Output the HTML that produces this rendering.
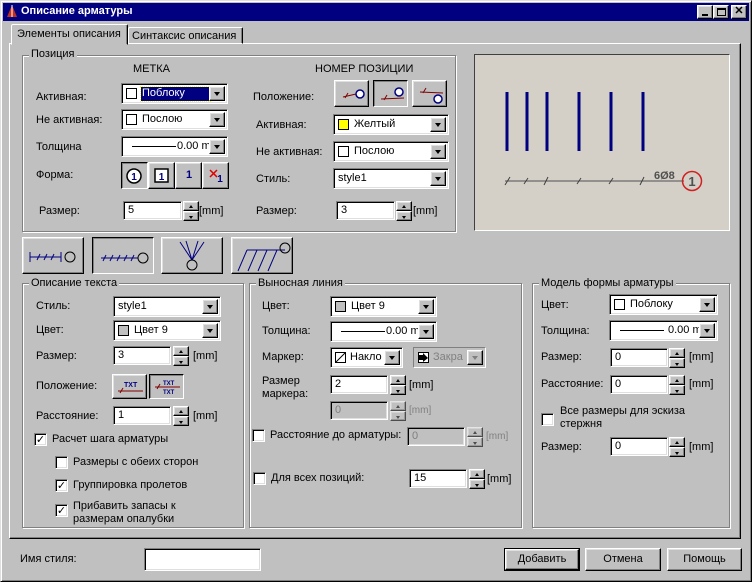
<!DOCTYPE html>
<html><head><meta charset="utf-8"><style>
*{box-sizing:border-box;margin:0;padding:0}
body{width:752px;height:582px;background:#c0c0c0;font:11px "Liberation Sans",sans-serif;color:#000;position:relative;overflow:hidden}
div,span,i,svg{position:absolute}
.l{white-space:nowrap}
.f{background:#fff;border:1px solid;border-color:#808080 #fff #fff #808080;box-shadow:inset 1px 1px #000,inset -1px -1px #dfdfdf}
.f .t{left:4px;top:3px;white-space:nowrap}
.fd{background:#c0c0c0}
.fd .t{color:#808080}
.b{background:#c0c0c0;border:1px solid;border-color:#fff #000 #000 #fff;box-shadow:inset -1px -1px #808080,inset 1px 1px #dfdfdf}
.bp{background:#c0c0c0;border:1px solid;border-color:#000 #fff #fff #000;box-shadow:inset 1px 1px #808080}
.ar{right:2px;top:2px;bottom:2px;width:16px}
.ar:after{content:"";position:absolute;left:4px;top:50%;margin-top:-2px;border:3.5px solid transparent;border-top:4px solid #000;border-bottom:0}
.ard:after{border-top-color:#808080}
.sw{width:11px;height:11px;border:1px solid #000;background:#fff;top:4px;left:4px}
.g{border:1px solid #808080;box-shadow:inset 1px 1px #fff,1px 1px #fff}
.gl{background:#c0c0c0;padding:0 2px;white-space:nowrap}
.sp{width:16px}
.sp i{left:0;width:16px;height:10px}
.sp i:after{content:"";position:absolute;left:5px;border:2.5px solid transparent}
.up:after{top:3px;border-bottom:3px solid #000!important;border-top:0!important}
.dn:after{top:4px;border-top:3px solid #000!important;border-bottom:0!important}
.ck{width:13px;height:13px;background:#fff;border:1px solid;border-color:#808080 #fff #fff #808080;box-shadow:inset 1px 1px #000,inset -1px -1px #dfdfdf;font:bold 11px "DejaVu Sans",sans-serif;line-height:11px;text-align:center}
</style></head><body>
<!-- window frame -->
<div style="left:0;top:0;width:752px;height:582px;border:1px solid;border-color:#dfdfdf #000 #000 #dfdfdf;box-shadow:inset 1px 1px #fff,inset -1px -1px #808080"></div>
<div style="left:3px;top:3px;width:746px;height:18px;background:#000080"></div>
<svg style="left:5px;top:4px" width="14" height="14"><path d="M2 13 L7 1 L12 13 Z" fill="#c03020"/><path d="M7 1 L7 13" stroke="#fff"/></svg>
<div class="l" style="left:21px;top:5px;color:#fff;font-weight:bold;font-size:11px">Описание арматуры</div>
<div class="b" style="left:697px;top:5px;width:16px;height:14px"><div style="left:4px;top:8px;width:6px;height:2px;background:#000"></div></div>
<div class="b" style="left:713px;top:5px;width:16px;height:14px"><div style="left:3px;top:2px;width:9px;height:8px;border:1px solid #000;border-top-width:2px"></div></div>
<div class="b" style="left:731px;top:5px;width:16px;height:14px;font:bold 11px sans-serif;text-align:center;line-height:11px">✕</div>

<!-- tabs -->
<div style="left:9px;top:43px;width:732px;height:496px;border:1px solid;border-color:#fff #000 #000 #fff;box-shadow:inset -1px -1px #808080"></div>
<div style="left:128px;top:27px;width:115px;height:17px;border:1px solid;border-color:#fff #000 transparent #fff;box-shadow:inset -1px 0 #808080;border-radius:2px 2px 0 0"></div>
<div class="l" style="left:132px;top:30px">Синтаксис описания</div>
<div style="left:11px;top:24px;width:117px;height:21px;background:#c0c0c0;border:1px solid;border-color:#fff #000 transparent #fff;box-shadow:inset -1px 0 #808080;border-radius:2px 2px 0 0"></div>
<div class="l" style="left:17px;top:28px">Элементы описания</div>

<!-- Позиция group -->
<div class="g" style="left:22px;top:55px;width:434px;height:177px"></div>
<div class="gl" style="left:29px;top:48px">Позиция</div>
<div class="l" style="left:133px;top:63px">МЕТКА</div>
<div class="l" style="left:315px;top:63px">НОМЕР ПОЗИЦИИ</div>

<div class="l" style="left:36px;top:91px">Активная:</div>
<div class="f" style="left:121px;top:83px;width:107px;height:21px"><div class="sw"></div><div style="left:19px;top:3px;width:69px;height:14px;background:#000080;outline:1px dotted #ff0"></div><span class="t" style="left:20px;color:#fff">Поблоку</span><i class="b ar"></i></div>
<div class="l" style="left:36px;top:114px">Не активная:</div>
<div class="f" style="left:121px;top:109px;width:107px;height:21px"><div class="sw"></div><span class="t" style="left:20px">Послою</span><i class="b ar"></i></div>
<div class="l" style="left:36px;top:141px">Толщина</div>
<div class="f" style="left:121px;top:136px;width:107px;height:21px"><div style="left:10px;top:9px;width:44px;height:1px;background:#000"></div><span class="t" style="left:55px">0.00 mi</span><i class="b ar"></i></div>
<div class="l" style="left:36px;top:169px">Форма:</div>
<div class="bp" style="left:121px;top:162px;width:27px;height:27px"><svg style="left:4px;top:5px" width="16" height="16"><circle cx="8" cy="8" r="7" fill="#fff" stroke="#000" stroke-width="1.5"/><text x="8" y="12" font-size="10" font-weight="bold" text-anchor="middle" fill="#000080" font-family="Liberation Sans">1</text></svg></div>
<div class="b" style="left:148px;top:162px;width:27px;height:27px"><svg style="left:5px;top:5px" width="16" height="16"><rect x="1" y="1" width="13" height="13" fill="#fff" stroke="#000" stroke-width="1.5"/><text x="7.5" y="12" font-size="10" font-weight="bold" text-anchor="middle" fill="#000080" font-family="Liberation Sans">1</text></svg></div>
<div class="b" style="left:175px;top:162px;width:27px;height:27px"><span class="l" style="left:10px;top:6px;font-weight:bold;color:#000080">1</span></div>
<div class="b" style="left:202px;top:162px;width:27px;height:27px"><svg style="left:5px;top:5px" width="18" height="16"><path d="M2 2 L9 9 M9 2 L2 9" stroke="#e00000" stroke-width="1.5"/><text x="12" y="14" font-size="10" font-weight="bold" text-anchor="middle" fill="#000080" font-family="Liberation Sans">1</text></svg></div>
<div class="l" style="left:39px;top:205px">Размер:</div>
<div class="f" style="left:123px;top:201px;width:59px;height:19px"><span class="t" style="top:2px">5</span></div>
<div class="sp" style="left:183px;top:201px;height:20px"><i class="b up" style="top:0"></i><i class="b dn" style="top:10px"></i></div>
<div class="l" style="left:199px;top:205px">[mm]</div>

<div class="l" style="left:253px;top:91px">Положение:</div>
<div class="b" style="left:334px;top:80px;width:35px;height:27px"><svg style="left:4px;top:4px" width="26" height="18"><path d="M4 12 L17 9" stroke="#800000"/><path d="M6 13 L9 8" stroke="#800000"/><circle cx="21" cy="9" r="4" fill="#fff" stroke="#000080" stroke-width="1.5"/></svg></div>
<div class="bp" style="left:373px;top:80px;width:35px;height:27px"><svg style="left:4px;top:4px" width="26" height="18"><path d="M3 14 L26 13" stroke="#800000"/><path d="M6 15 L9 10" stroke="#800000"/><circle cx="21" cy="7" r="4" fill="#fff" stroke="#000080" stroke-width="1.5"/></svg></div>
<div class="b" style="left:412px;top:80px;width:35px;height:27px"><svg style="left:4px;top:4px" width="26" height="20"><path d="M3 7 L26 8" stroke="#800000"/><path d="M6 8 L9 3" stroke="#800000"/><circle cx="21" cy="14" r="4" fill="#fff" stroke="#000080" stroke-width="1.5"/></svg></div>
<div class="l" style="left:256px;top:119px">Активная:</div>
<div class="f" style="left:333px;top:114px;width:116px;height:21px"><div class="sw" style="background:#ff0"></div><span class="t" style="left:20px">Желтый</span><i class="b ar"></i></div>
<div class="l" style="left:256px;top:146px">Не активная:</div>
<div class="f" style="left:333px;top:141px;width:116px;height:21px"><div class="sw"></div><span class="t" style="left:20px">Послою</span><i class="b ar"></i></div>
<div class="l" style="left:256px;top:173px">Стиль:</div>
<div class="f" style="left:333px;top:168px;width:116px;height:21px"><span class="t">style1</span><i class="b ar"></i></div>
<div class="l" style="left:256px;top:205px">Размер:</div>
<div class="f" style="left:336px;top:201px;width:59px;height:19px"><span class="t" style="top:2px">3</span></div>
<div class="sp" style="left:396px;top:201px;height:20px"><i class="b up" style="top:0"></i><i class="b dn" style="top:10px"></i></div>
<div class="l" style="left:413px;top:205px">[mm]</div>

<!-- preview -->
<div style="left:474px;top:54px;width:256px;height:177px;background:#d4d0c8;border:1px solid;border-color:#404040 #fff #fff #404040"></div>
<svg style="left:474px;top:54px" width="256" height="177">
<g stroke="#000080" stroke-width="3"><path d="M33 38V97M53 38V97M73 38V97M105 38V97M137 38V97M169 38V97"/></g>
<path d="M31 127H210" stroke="#505050"/>
<g stroke="#404040"><path d="M31 131L36 123M50 130L54 124M70 131L74 123M103 130L107 124M135 130L139 124M166 131L170 123"/></g>
<text x="180" y="125" font-size="11" font-weight="bold" fill="#505050" font-family="Liberation Sans">6Ø8</text>
<circle cx="218" cy="127" r="9.5" fill="none" stroke="#d02020" stroke-width="1.5"/>
<text x="218" y="132" font-size="13" font-weight="bold" fill="#505050" text-anchor="middle" font-family="Liberation Sans">1</text>
</svg>

<!-- big buttons -->
<div class="b" style="left:22px;top:237px;width:62px;height:37px"><svg style="left:4px;top:6px" width="54" height="24"><path d="M3 13H34M3 8V18M34 8V18" stroke="#000080"/><path d="M10 16L13 10M17 16L20 10M24 16L27 10" stroke="#000080"/><circle cx="43" cy="13" r="5" fill="none" stroke="#000"/></svg></div>
<div class="bp" style="left:92px;top:237px;width:62px;height:37px"><svg style="left:5px;top:6px" width="54" height="24"><path d="M3 14H40" stroke="#000080"/><path d="M5 17L8 11M12 17L15 11M19 17L22 11M26 17L29 11M33 17L36 11" stroke="#000080"/><circle cx="45" cy="14" r="5" fill="none" stroke="#000"/></svg></div>
<div class="b" style="left:161px;top:237px;width:62px;height:37px"><svg style="left:15px;top:2px" width="34" height="32"><path d="M3 2L15 20M9 1L15 20M21 1L15 20M27 2L15 20" stroke="#000080"/><circle cx="15" cy="25" r="5" fill="none" stroke="#000"/></svg></div>
<div class="b" style="left:231px;top:237px;width:62px;height:37px"><svg style="left:3px;top:2px" width="56" height="34"><path d="M12 10H50" stroke="#000080"/><path d="M12 10L3 31M22 10L13 31M32 10L23 31M42 10L33 31" stroke="#000080"/><circle cx="50" cy="8" r="5" fill="none" stroke="#000"/></svg></div>

<!-- Описание текста -->
<div class="g" style="left:22px;top:283px;width:222px;height:245px"></div>
<div class="gl" style="left:29px;top:277px">Описание текста</div>
<div class="l" style="left:36px;top:300px">Стиль:</div>
<div class="f" style="left:113px;top:296px;width:108px;height:21px"><span class="t">style1</span><i class="b ar"></i></div>
<div class="l" style="left:36px;top:324px">Цвет:</div>
<div class="f" style="left:113px;top:320px;width:108px;height:21px"><div class="sw" style="background:#c0c0c0"></div><span class="t" style="left:20px">Цвет 9</span><i class="b ar"></i></div>
<div class="l" style="left:36px;top:350px">Размер:</div>
<div class="f" style="left:113px;top:346px;width:58px;height:19px"><span class="t" style="top:2px">3</span></div>
<div class="sp" style="left:173px;top:346px;height:20px"><i class="b up" style="top:0"></i><i class="b dn" style="top:10px"></i></div>
<div class="l" style="left:193px;top:350px">[mm]</div>
<div class="l" style="left:36px;top:380px">Положение:</div>
<div class="b" style="left:112px;top:374px;width:35px;height:25px"><svg style="left:3px;top:3px" width="28" height="18"><text x="8" y="9" font-size="7" font-weight="bold" fill="#000080" font-family="Liberation Sans">TXT</text><path d="M2 13H27" stroke="#800000"/><path d="M4 15L7 10" stroke="#800000"/></svg></div>
<div class="bp" style="left:149px;top:374px;width:35px;height:25px"><svg style="left:3px;top:2px" width="28" height="20"><text x="10" y="8" font-size="6" font-weight="bold" fill="#000080" font-family="Liberation Sans">TXT</text><path d="M2 10H27" stroke="#800000"/><path d="M4 12L7 7" stroke="#800000"/><text x="10" y="17" font-size="6" font-weight="bold" fill="#000080" font-family="Liberation Sans">TXT</text></svg></div>
<div class="l" style="left:36px;top:410px">Расстояние:</div>
<div class="f" style="left:113px;top:406px;width:58px;height:19px"><span class="t" style="top:2px">1</span></div>
<div class="sp" style="left:173px;top:406px;height:20px"><i class="b up" style="top:0"></i><i class="b dn" style="top:10px"></i></div>
<div class="l" style="left:193px;top:410px">[mm]</div>
<div class="ck" style="left:34px;top:433px">✓</div><div class="l" style="left:52px;top:433px">Расчет шага арматуры</div>
<div class="ck" style="left:55px;top:456px"></div><div class="l" style="left:73px;top:456px">Размеры с обеих сторон</div>
<div class="ck" style="left:55px;top:479px">✓</div><div class="l" style="left:73px;top:479px">Группировка пролетов</div>
<div class="ck" style="left:55px;top:504px">✓</div><div class="l" style="left:73px;top:500px;line-height:13px">Прибавить запасы к<br>размерам опалубки</div>

<!-- Выносная линия -->
<div class="g" style="left:249px;top:283px;width:273px;height:245px"></div>
<div class="gl" style="left:256px;top:277px">Выносная линия</div>
<div class="l" style="left:262px;top:300px">Цвет:</div>
<div class="f" style="left:330px;top:296px;width:107px;height:21px"><div class="sw" style="background:#c0c0c0"></div><span class="t" style="left:20px">Цвет 9</span><i class="b ar"></i></div>
<div class="l" style="left:262px;top:325px">Толщина:</div>
<div class="f" style="left:330px;top:321px;width:107px;height:21px"><div style="left:10px;top:9px;width:44px;height:1px;background:#000"></div><span class="t" style="left:55px">0.00 mr</span><i class="b ar"></i></div>
<div class="l" style="left:262px;top:351px">Маркер:</div>
<div class="f" style="left:330px;top:347px;width:73px;height:21px"><svg style="left:4px;top:4px" width="12" height="12"><rect x="0.5" y="0.5" width="10" height="10" fill="#fff" stroke="#000"/><path d="M1 10L10 1" stroke="#000"/></svg><span class="t" style="left:19px">Накло</span><i class="b ar"></i></div>
<div class="f fd" style="left:413px;top:347px;width:73px;height:21px;box-shadow:none;border-color:#808080 #fff #fff #808080"><svg style="left:4px;top:4px" width="12" height="12"><rect x="0.5" y="0.5" width="10" height="10" fill="#fff" stroke="#000"/><path d="M1 3H5V1L10 6L5 10V8H1Z" fill="#000"/></svg><span class="t" style="left:19px">Закра</span><i class="b ar ard"></i></div>
<div class="l" style="left:262px;top:375px;line-height:13px">Размер<br><span style="position:static;color:#000">маркера:</span></div>
<div class="f" style="left:330px;top:375px;width:58px;height:19px"><span class="t" style="top:2px">2</span></div>
<div class="sp" style="left:390px;top:375px;height:20px"><i class="b up" style="top:0"></i><i class="b dn" style="top:10px"></i></div>
<div class="l" style="left:409px;top:379px">[mm]</div>
<div class="f fd" style="left:330px;top:401px;width:58px;height:19px"><span class="t" style="top:2px">0</span></div>
<div class="sp" style="left:390px;top:401px;height:20px;opacity:.6"><i class="b up" style="top:0"></i><i class="b dn" style="top:10px"></i></div>
<div class="l" style="left:409px;top:405px;color:#808080;font-size:10px">[mm]</div>
<div class="ck" style="left:252px;top:429px"></div><div class="l" style="left:270px;top:429px">Расстояние до арматуры:</div>
<div class="f fd" style="left:407px;top:427px;width:58px;height:19px"><span class="t" style="top:2px">0</span></div>
<div class="sp" style="left:467px;top:427px;height:20px;opacity:.6"><i class="b up" style="top:0"></i><i class="b dn" style="top:10px"></i></div>
<div class="l" style="left:486px;top:431px;color:#808080;font-size:10px">[mm]</div>
<div class="ck" style="left:253px;top:472px"></div><div class="l" style="left:271px;top:472px">Для всех позиций:</div>
<div class="f" style="left:409px;top:469px;width:58px;height:19px"><span class="t" style="top:2px">15</span></div>
<div class="sp" style="left:469px;top:469px;height:20px"><i class="b up" style="top:0"></i><i class="b dn" style="top:10px"></i></div>
<div class="l" style="left:487px;top:473px">[mm]</div>

<!-- Модель формы арматуры -->
<div class="g" style="left:532px;top:283px;width:198px;height:245px"></div>
<div class="gl" style="left:539px;top:277px">Модель формы арматуры</div>
<div class="l" style="left:541px;top:299px">Цвет:</div>
<div class="f" style="left:609px;top:294px;width:109px;height:21px"><div class="sw"></div><span class="t" style="left:20px">Поблоку</span><i class="b ar"></i></div>
<div class="l" style="left:541px;top:325px">Толщина:</div>
<div class="f" style="left:609px;top:320px;width:109px;height:21px"><div style="left:10px;top:9px;width:44px;height:1px;background:#000"></div><span class="t" style="left:58px">0.00 mr</span><i class="b ar"></i></div>
<div class="l" style="left:541px;top:351px">Размер:</div>
<div class="f" style="left:610px;top:348px;width:58px;height:19px"><span class="t" style="top:2px">0</span></div>
<div class="sp" style="left:669px;top:348px;height:20px"><i class="b up" style="top:0"></i><i class="b dn" style="top:10px"></i></div>
<div class="l" style="left:689px;top:351px">[mm]</div>
<div class="l" style="left:541px;top:378px">Расстояние:</div>
<div class="f" style="left:610px;top:375px;width:58px;height:19px"><span class="t" style="top:2px">0</span></div>
<div class="sp" style="left:669px;top:375px;height:20px"><i class="b up" style="top:0"></i><i class="b dn" style="top:10px"></i></div>
<div class="l" style="left:689px;top:378px">[mm]</div>
<div class="ck" style="left:541px;top:413px"></div><div class="l" style="left:560px;top:405px;line-height:13px">Все размеры для эскиза<br>стержня</div>
<div class="l" style="left:541px;top:441px">Размер:</div>
<div class="f" style="left:610px;top:437px;width:58px;height:19px"><span class="t" style="top:2px">0</span></div>
<div class="sp" style="left:669px;top:437px;height:20px"><i class="b up" style="top:0"></i><i class="b dn" style="top:10px"></i></div>
<div class="l" style="left:689px;top:441px">[mm]</div>

<!-- bottom -->
<div class="l" style="left:20px;top:553px">Имя стиля:</div>
<div class="f" style="left:144px;top:548px;width:117px;height:23px"></div>
<div style="left:504px;top:548px;width:76px;height:23px;border:1px solid #000"><div class="b" style="left:0;top:0;right:0;bottom:0;text-align:center;line-height:19px;position:absolute">Добавить</div></div>
<div class="b" style="left:585px;top:548px;width:76px;height:23px;text-align:center;line-height:20px">Отмена</div>
<div class="b" style="left:667px;top:548px;width:75px;height:23px;text-align:center;line-height:20px">Помощь</div>
</body></html>
